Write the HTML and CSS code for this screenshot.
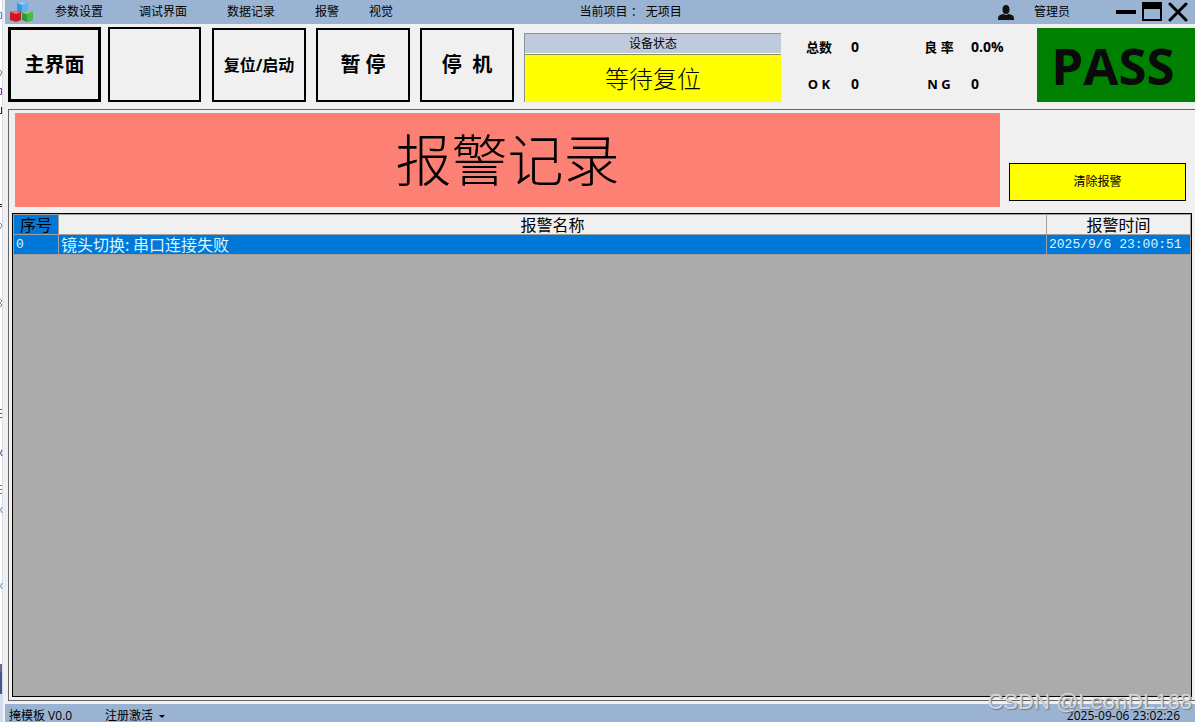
FILE: index.html
```html
<!DOCTYPE html>
<html lang="zh-CN">
<head>
  <meta charset="UTF-8">
  <title>报警记录</title>
  <link rel="stylesheet" href="styles.css">
</head>
<body>
  <!-- sliver of the desktop behind the window -->
  <svg class="desktop-edge" width="5" height="722" viewBox="0 0 5 722" aria-hidden="true">
    <rect width="2" height="722" fill="#fff"/>
    <rect x="2" width="1" height="722" fill="#d9dbe8"/>
    <path d="M0 12.5h1.5v6H0" fill="none" stroke="#3f8fb0"/>
    <path d="M0 70l2 2-2 4" fill="none" stroke="#777"/>
    <path d="M0 88.500h1.500v6H0" fill="none" stroke="#80308c"/>
    <path d="M1.500 107v6M0 113.500h2M0 204.500h2M0 206.500h2" stroke="#222"/>
    <path d="M0 223l2 2-2 4M0 299l2 2-2 2 2 2-2 2" fill="none" stroke="#888"/>
    <path d="M0 409.500h2M0 413.500h2M0 417.500h2" stroke="#65594a"/>
    <path d="M2 450q-3 3 0 6" fill="none" stroke="#445"/>
    <path d="M0 485.500h2M0 489.500h2M0 493.500h2" stroke="#3a86b5"/>
    <path d="M2 507q-3 3 0 6M2 583q-3 3 0 6" fill="none" stroke="#4f9db0"/>
    <rect y="664" width="2" height="8" fill="#74628a"/>
    <rect y="672" width="2" height="22" fill="#43588c"/>
    <rect y="694" width="2" height="28" fill="#cfdcf2"/>
  </svg>

  <div class="window">
    <header class="title-bar">
      <div class="title-left">
        <svg class="logo" width="24" height="20" viewBox="0 0 24 20" aria-hidden="true">
          <path d="M7 1l5-1 6 1v8l-6 2-5-2z" fill="#3498e0"/>
          <path d="M7 1l5-1 6 1-6 2z" fill="#8fd0f8"/>
          <path d="M12 3l6-2v8l-6 2z" fill="#5fb4ee"/>
          <path d="M0 10l5-1 6 1v8l-5 2-6-2z" fill="#cc1a1e"/>
          <path d="M0 10l5-1 6 1-5 2z" fill="#f07070"/>
          <path d="M12 11l6-2 5 1v8l-6 2-5-2z" fill="#2e9836"/>
          <path d="M12 11l6-2 5 1-6 2z" fill="#84dc78"/>
          <path d="M17 12l6-2v8l-6 2z" fill="#4cb848"/>
        </svg>
        <nav class="menu">
          <button type="button">参数设置</button>
          <button type="button">调试界面</button>
          <button type="button">数据记录</button>
          <button type="button">报警</button>
          <button type="button">视觉</button>
        </nav>
      </div>
      <div class="project">当前项目 ： 无项目</div>
      <div class="title-right">
        <button type="button" class="user-btn">
          <svg width="16" height="15" viewBox="0 0 16 15" aria-hidden="true">
            <ellipse cx="8" cy="4.500" rx="3.500" ry="4.500" fill="#111"/>
            <path d="M0 15v-2q0-3 5-4l3 1 3-1q5 1 5 4v2z" fill="#111"/>
          </svg>
          <span>管理员</span>
        </button>
        <div class="window-btns">
          <button type="button" aria-label="最小化">
            <svg width="20" height="20" viewBox="0 0 20 20"><path d="M0 8h20v4H0z"/></svg>
          </button>
          <button type="button" aria-label="最大化">
            <svg width="20" height="20" viewBox="0 0 20 20"><path fill-rule="evenodd" d="M0 0h20v19H0zM2 7v10h16V7z"/></svg>
          </button>
          <button type="button" aria-label="关闭">
            <svg width="20" height="20" viewBox="0 0 20 20"><path d="M2 2l16 16M18 2L2 18" stroke="#000" stroke-width="3" stroke-linecap="round"/></svg>
          </button>
        </div>
      </div>
    </header>

    <section class="toolbar">
      <div class="page-btns">
        <button type="button" class="tool-btn active">主界面</button>
        <button type="button" class="tool-btn" aria-label="空"></button>
      </div>
      <div class="run-btns">
        <button type="button" class="tool-btn small">复位/启动</button>
        <button type="button" class="tool-btn">暂 停</button>
        <button type="button" class="tool-btn">停  机</button>
      </div>
      <div class="device">
        <div class="device-title">设备状态</div>
        <div class="device-state">等待复位</div>
      </div>
      <dl class="stats">
        <dt>总数</dt><dd>0</dd>
        <dt>良 率</dt><dd>0.0%</dd>
        <dt>O K</dt><dd>0</dd>
        <dt>N G</dt><dd>0</dd>
      </dl>
      <div class="result">PASS</div>
    </section>

    <main class="panel">
      <div class="panel-head">
        <h1>报警记录</h1>
        <button type="button" class="clear-btn">清除报警</button>
      </div>
      <div class="grid-box">
        <table class="alarms">
          <thead>
            <tr>
              <th class="col-no">序号</th>
              <th>报警名称</th>
              <th class="col-time">报警时间</th>
            </tr>
          </thead>
          <tbody>
            <tr>
              <td class="num">0</td>
              <td>镜头切换: 串口连接失败</td>
              <td class="num">2025/9/6 23:00:51</td>
            </tr>
          </tbody>
        </table>
      </div>
    </main>

    <footer class="status-bar">
      <span class="version">掩模板 V0.0</span>
      <button type="button">注册激活 <span class="caret"></span></button>
      <time>2025-09-06 23:02:26</time>
    </footer>
  </div>

  <div class="watermark">CSDN @LeonDL168</div>
</body>
</html>
```

FILE: styles.css
```css
* {
  box-sizing: border-box;
}
body {
  margin: 0;
  height: 100vh;
  display: flex;
  overflow: hidden;
  position: relative;
  background: #f0f0f0;
  color: #000;
  font-family: 'Open Sans', 'Noto Sans CJK SC', sans-serif;
  font-size: 12px;
  line-height: 16px;
}
button {
  margin: 0;
  padding: 0;
  border: none;
  background: none;
  color: inherit;
  font: inherit;
  white-space: nowrap;
  cursor: pointer;
}
svg {
  display: block;
}
.desktop-edge {
  flex: none;
}
.window {
  flex: 1;
  min-width: 0;
  display: flex;
  flex-direction: column;
}

/* title bar */
.title-bar {
  display: flex;
  align-items: center;
  height: 24px;
  background: #9ab3d3;
}
.title-left {
  flex: 9 1 0;
  display: flex;
  align-items: center;
  gap: 21px;
  padding-left: 5px;
}
.menu {
  display: grid;
  grid-template-columns: 84px 88px 88px 54px auto;
  justify-items: start;
}
.project {
  white-space: nowrap;
}
.title-right {
  flex: 8 1 0;
  display: flex;
  align-items: center;
  justify-content: flex-end;
  gap: 46px;
  padding-right: 7px;
}
.user-btn {
  display: flex;
  align-items: center;
  gap: 20px;
}
.window-btns {
  display: flex;
  gap: 6px;
}

/* toolbar */
.toolbar {
  display: flex;
  align-items: flex-end;
  height: 85px;
  padding: 0 0 7px 3px;
}
.page-btns {
  display: flex;
  gap: 7px;
  margin-right: 11px;
}
.run-btns {
  display: flex;
  gap: 10px;
  margin-right: 10px;
}
.tool-btn {
  width: 94px;
  height: 74px;
  border: 2px solid #000;
  font-size: 20px;
  font-weight: bold;
  white-space: pre;
}
.page-btns .tool-btn {
  width: 93px;
  height: 75px;
}
.tool-btn.active {
  border-width: 3px;
}
.tool-btn.small {
  font-size: 16px;
}
.device {
  flex: 0 1 257px;
  border: 1px solid #8d929a;
  border-width: 1px 0 0 1px;
  text-align: center;
}
.device-title {
  height: 20px;
  line-height: 20px;
  background: #bfcbdc;
  border-bottom: 1px solid #fff;
}
.device-state {
  height: 48px;
  line-height: 48px;
  border-top: 1px solid #8d8d50;
  background: #ff0;
  font-size: 24px;
  font-weight: 300;
}
.stats {
  flex: 1;
  display: grid;
  grid-template-columns: 47px 73px 47px auto;
  justify-content: start;
  row-gap: 21px;
  margin: 0;
  padding: 0 0 10px 23px;
  font-size: 13px;
  font-weight: bold;
}
.stats dt {
  width: 30px;
  text-align: center;
  white-space: nowrap;
}
.stats dd {
  margin: 0;
  font-size: 14px;
}
.result {
  width: 158px;
  height: 74px;
  padding-right: 6px;
  background: #008000;
  color: #0a0a0a;
  font-size: 51px;
  font-weight: bold;
  line-height: 74px;
  text-align: center;
}

/* alarm panel */
.panel {
  flex: 1;
  min-height: 0;
  display: flex;
  flex-direction: column;
  gap: 6px;
  margin: 0 0 3px 3px;
  padding: 3px;
  border: 1px solid #666;
  border-right: none;
}
.panel-head {
  display: flex;
  align-items: flex-end;
  gap: 9px;
  padding: 0 6px 0 3px;
}
.panel-head h1 {
  flex: 1;
  height: 94px;
  margin: 0;
  background: #fd8074;
  font-size: 56px;
  font-weight: 300;
  line-height: 92px;
  text-align: center;
}
.clear-btn {
  width: 177px;
  height: 38px;
  margin-bottom: 6px;
  border: 1px solid #000;
  background: #ff0;
}
.grid-box {
  flex: 1;
  min-height: 0;
  border: 1px solid #000;
  background: #ababab;
}
.alarms {
  width: 100%;
  border-collapse: separate;
  border-spacing: 0;
  border: 1px solid #a0a0a0;
  border-bottom: none;
  table-layout: fixed;
  font-family: 'Noto Sans CJK SC', sans-serif;
  font-size: 16px;
  line-height: 19px;
}
.alarms th,
.alarms td {
  height: 20px;
  padding: 0 2px;
  border-right: 1px solid #a0a0a0;
  border-bottom: 1px solid #a0a0a0;
  font-weight: normal;
  white-space: nowrap;
}
.alarms th {
  background: #f0f0f0;
}
.alarms th:last-child,
.alarms td:last-child {
  border-right: none;
}
.alarms .col-no {
  width: 45px;
  background: #0078d7;
}
.alarms .col-time {
  width: 143px;
}
.alarms td {
  background: #0078d7;
  color: #d9f6ff;
}
.alarms .num {
  font-family: 'Liberation Mono', monospace;
  font-size: 13px;
}

/* status bar */
.status-bar {
  display: flex;
  height: 18px;
  padding: 4px 15px 0 4px;
  overflow: hidden;
  background: #9ab3d3;
  white-space: nowrap;
}
.status-bar .version {
  width: 96px;
}
.status-bar button {
  display: flex;
  align-items: center;
  gap: 6px;
  height: 16px;
}
.status-bar time {
  margin-left: auto;
}
.caret {
  border: 3px solid transparent;
  border-top-color: #000;
  border-bottom: none;
}
.watermark {
  position: absolute;
  right: 3px;
  bottom: 8px;
  color: rgba(225, 228, 232, 0.85);
  font-family: 'Liberation Sans', sans-serif;
  font-size: 22px;
  line-height: 24px;
  text-shadow: 1px 1px 1px #777;
  pointer-events: none;
}
```
